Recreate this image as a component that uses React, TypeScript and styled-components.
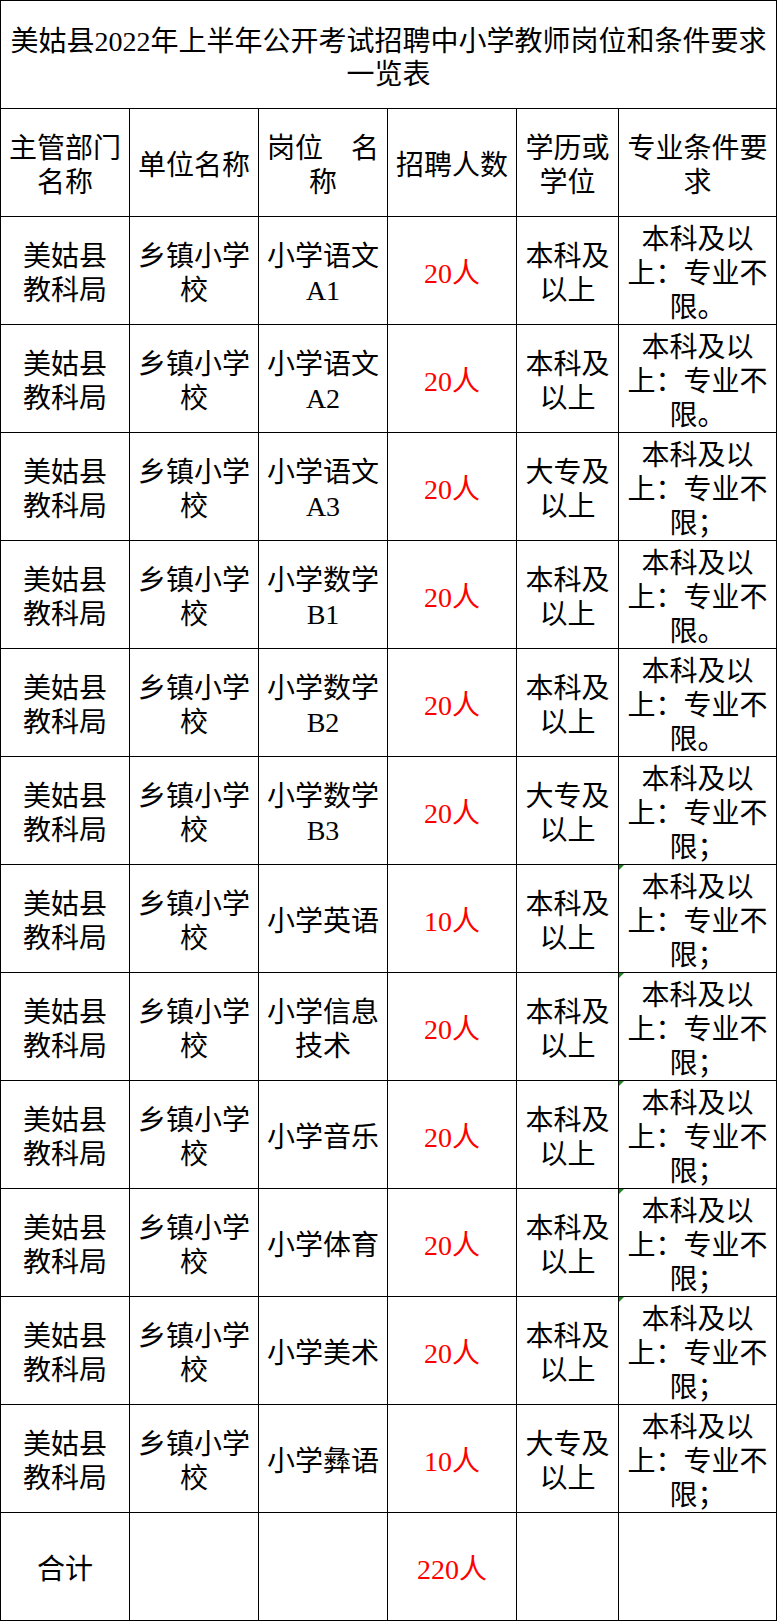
import React from 'react';
import styled, { createGlobalStyle } from 'styled-components';

type Row = {
  post: string[];
  count: string;
  degree: string;
  end: string;
  marked?: boolean;
};

const rows: Row[] = [
  { post: ['小学语文', 'A1'], count: '20人', degree: '本科及', end: '限。' },
  { post: ['小学语文', 'A2'], count: '20人', degree: '本科及', end: '限。' },
  { post: ['小学语文', 'A3'], count: '20人', degree: '大专及', end: '限；' },
  { post: ['小学数学', 'B1'], count: '20人', degree: '本科及', end: '限。' },
  { post: ['小学数学', 'B2'], count: '20人', degree: '本科及', end: '限。' },
  { post: ['小学数学', 'B3'], count: '20人', degree: '大专及', end: '限；' },
  { post: ['小学英语'], count: '10人', degree: '本科及', end: '限；', marked: true },
  { post: ['小学信息', '技术'], count: '20人', degree: '本科及', end: '限；', marked: true },
  { post: ['小学音乐'], count: '20人', degree: '本科及', end: '限；', marked: true },
  { post: ['小学体育'], count: '20人', degree: '本科及', end: '限；', marked: true },
  { post: ['小学美术'], count: '20人', degree: '本科及', end: '限；', marked: true },
  { post: ['小学彝语'], count: '10人', degree: '大专及', end: '限；' },
];

const headers: string[][] = [
  ['主管部门', '名称'],
  ['单位名称'],
  ['岗位　名', '称'],
  ['招聘人数'],
  ['学历或', '学位'],
  ['专业条件要', '求'],
];

// 여러 줄 텍스트를 줄 단위로 출력
const Lines = ({ lines }: { lines: string[] }) => (
  <>
    {lines.map((l, i) => (
      <Line key={i}>{l}</Line>
    ))}
  </>
);

const App: React.FC = () => {
  return (
    <>
      <GlobalStyle />
      <Sheet>
        <TitleCell>
          <Line>美姑县2022年上半年公开考试招聘中小学教师岗位和条件要求</Line>
          <Line>一览表</Line>
        </TitleCell>

        {headers.map((h, i) => (
          <Cell key={i}>
            <Lines lines={h} />
          </Cell>
        ))}

        {rows.map((r, i) => (
          <React.Fragment key={i}>
            <Cell>
              <Lines lines={['美姑县', '教科局']} />
            </Cell>
            <Cell>
              <Lines lines={['乡镇小学', '校']} />
            </Cell>
            <Cell>
              <Lines lines={r.post} />
            </Cell>
            <Cell>
              <Count>{r.count}</Count>
            </Cell>
            <Cell>
              <Lines lines={[r.degree, '以上']} />
            </Cell>
            <Cell $marked={r.marked}>
              <Lines lines={['本科及以', '上：专业不', r.end]} />
            </Cell>
          </React.Fragment>
        ))}

        <Cell>
          <Line>合计</Line>
        </Cell>
        <Cell />
        <Cell />
        <Cell>
          <Count>220人</Count>
        </Cell>
        <Cell />
        <Cell />
      </Sheet>
    </>
  );
};

export default App;

const GlobalStyle = createGlobalStyle`
  html, body {
    margin: 0;
    padding: 0;
    background: #ffffff;
  }

  body {
    font-family: "Liberation Serif", "Noto Sans CJK SC", serif;
    color: #000000;
  }
`;

const Sheet = styled.div`
  display: grid;
  grid-template-columns: 129px 129px 129px 129px 102px 158px;
  grid-auto-rows: 108px;
  width: 777px;
  box-sizing: border-box;
  border-top: 1px solid #000;
  border-left: 1px solid #000;
`;

const Cell = styled.div<{ $marked?: boolean }>`
  position: relative;
  box-sizing: border-box;
  border-right: 1px solid #000;
  border-bottom: 1px solid #000;
  padding-top: 6px;
  display: flex;
  flex-direction: column;
  align-items: center;
  justify-content: center;
  font-size: 28px;
  line-height: 34px;
  text-align: center;

  &::before {
    content: '';
    display: ${(p) => (p.$marked ? 'block' : 'none')};
    position: absolute;
    top: 0;
    left: 0;
    width: 0;
    height: 0;
    border-top: 5px solid #1e8a1e;
    border-right: 5px solid transparent;
  }
`;

const TitleCell = styled(Cell)`
  grid-column: 1 / -1;
  line-height: 33px;
`;

const Line = styled.span`
  display: block;
  white-space: pre;
`;

const Count = styled.span`
  color: #ff0000;
  white-space: nowrap;
`;
